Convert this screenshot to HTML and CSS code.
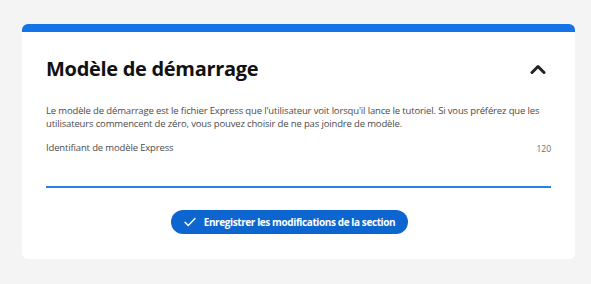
FILE: index.html
```html
<!DOCTYPE html>
<html lang="fr">
<head>
    <meta charset="UTF-8">
    <meta name="viewport" content="width=device-width, initial-scale=1.0">
    <title>Modèle de démarrage</title>
    <link rel="stylesheet" href="styles.css">
</head>
<body>
    <div class="section-card">
        <div class="section-header">
            <h2>Modèle de démarrage</h2>
            <button class="collapse-btn" aria-label="Réduire">
                <svg width="16" height="10" viewBox="0 0 16 10">
                    <path d="M2 8.5 L8 2.5 L14 8.5" fill="none" stroke="#222" stroke-width="3" stroke-linecap="round" stroke-linejoin="round"/>
                </svg>
            </button>
        </div>

        <p class="section-desc">Le modèle de démarrage est le fichier Express que l'utilisateur voit lorsqu'il lance le tutoriel. Si vous préférez que les utilisateurs commencent de zéro, vous pouvez choisir de ne pas joindre de modèle.</p>

        <div class="field">
            <div class="field-top">
                <label for="template-id">Identifiant de modèle Express</label>
                <span class="counter">120</span>
            </div>
            <input type="text" id="template-id">
        </div>

        <div class="actions">
            <button class="save-btn">
                <svg width="12" height="10" viewBox="0 0 12 10">
                    <path d="M1 5.2 L4.3 8.5 L11 1.5" fill="none" stroke="#fff" stroke-width="1.4" stroke-linecap="round" stroke-linejoin="round"/>
                </svg>
                Enregistrer les modifications de la section
            </button>
        </div>
    </div>
</body>
</html>
```

FILE: styles.css
```css
body {
    margin: 0;
    padding: 24px 16px 26px 22px;
    background-color: #f4f4f4;
    font-family: "Open Sans", "Noto Sans", sans-serif;
    color: #2c2c2c;
}
.section-card {
    background: white;
    border-top: 8px solid #1473e6;
    border-radius: 6px;
    padding: 23px 24px 25px 24px;
}
.section-header {
    display: flex;
    align-items: center;
    justify-content: space-between;
}
.section-header h2 {
    margin: 0;
    font-size: 20px;
    font-weight: 700;
    color: #111;
    letter-spacing: -0.3px;
}
.collapse-btn {
    background: none;
    border: none;
    padding: 0;
    margin-right: 5px;
    display: flex;
}
.section-desc {
    margin: 22px 0 0 0;
    font-size: 9.5px;
    line-height: 13px;
    color: #4b4b4b;
    letter-spacing: -0.15px;
    max-width: 500px;
}
.field {
    margin-top: 11px;
}
.field-top {
    display: flex;
    justify-content: space-between;
    align-items: flex-end;
}
.field-top label {
    font-size: 9.5px;
    color: #4b4b4b;
    letter-spacing: -0.15px;
}
.counter {
    font-size: 8.5px;
    color: #6e6e6e;
}
.field input {
    display: block;
    width: 100%;
    box-sizing: border-box;
    border: none;
    border-bottom: 2px solid #2680eb;
    height: 34px;
    outline: none;
}
.actions {
    display: flex;
    justify-content: center;
    margin-top: 22px;
    padding-right: 18px;
}
.save-btn {
    display: flex;
    align-items: center;
    gap: 8px;
    height: 24px;
    padding: 0 13px 0 13px;
    border: none;
    border-radius: 12px;
    background: #0d66d0;
    color: white;
    font-family: "Open Sans", "Noto Sans", sans-serif;
    font-size: 10px;
    font-weight: 700;
    letter-spacing: -0.4px;
}
```
